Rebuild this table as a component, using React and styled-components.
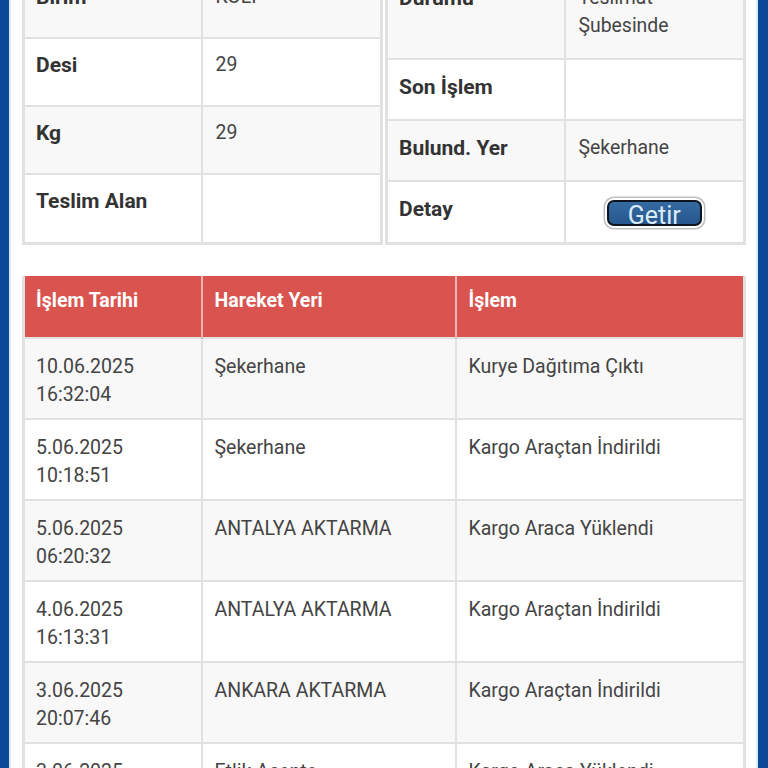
import React from 'react';
import styled, { createGlobalStyle } from 'styled-components';

const GlobalStyle = createGlobalStyle`
  html, body {
    margin: 0;
    padding: 0;
    background: #fff;
  }
  body {
    font-family: Roboto, "Liberation Sans", Arial, sans-serif;
    color: #333;
  }
`;

const Frame = styled.div`
  display: flex;
  height: 768px;
  overflow: hidden;
`;

const SideBar = styled.div`
  flex: none;
  width: ${p => (p.$side === 'left' ? '9px' : '10px')};
  background: #0b4a98;
  ${p => (p.$side === 'left' ? 'border-right' : 'border-left')}: 2px solid #dce8f5;
`;

const Content = styled.div`
  flex: 1;
  min-width: 0;
  padding: 0 10px 0 11px;
`;

// the page is scrolled a little, the first row is half out of view
const Scrolled = styled.div`
  margin-top: -32px;
`;

const InfoGrid = styled.div`
  display: grid;
  grid-template-columns: 1fr 1fr;
  gap: 2px;
  align-items: start;
`;

const InfoTable = styled.table`
  width: 100%;
  border-collapse: collapse;
  border: 3px solid #e1e1e1;
  table-layout: fixed;
`;

const InfoRow = styled.tr`
  height: ${p => p.$h}px;
  background: ${p => (p.$odd ? '#f8f8f8' : '#fff')};
`;

const Label = styled.td`
  box-sizing: border-box;
  width: 178px;
  padding: ${p => p.$pad || 13}px 11px 0;
  vertical-align: top;
  font-size: 21px;
  line-height: 28px;
  font-weight: 700;
  color: #333;
  border: 2px solid #e1e1e1;
`;

const Value = styled.td`
  padding: ${p => (p.$center ? 0 : p.$pad || 13)}px 13px 0;
  vertical-align: ${p => (p.$center ? 'middle' : 'top')};
  text-align: ${p => (p.$center ? 'center' : 'left')};
  font-size: 19.4px;
  line-height: 28px;
  color: #444;
  border: 2px solid #e1e1e1;
`;

const GetirButton = styled.button`
  display: inline-block;
  box-sizing: border-box;
  width: 95px;
  height: 26px;
  padding: 3px 0 0;
  border: 2px solid #10161f;
  border-radius: 7px;
  background: linear-gradient(#356aa3, #26578d);
  box-shadow: 0 0 0 2px #fff, 0 0 0 3.5px #bfbfbf;
  color: #dcebf8;
  font-family: Roboto, "Liberation Sans", Arial, sans-serif;
  font-size: 25px;
  font-weight: 400;
  line-height: 22px;
  overflow: hidden;
  vertical-align: middle;
`;

const MoveTable = styled.table`
  width: 100%;
  margin-top: 31px;
  border-collapse: collapse;
  table-layout: fixed;
  border: 3px solid #e1e1e1;
  border-top: none;
`;

const HeadCell = styled.th`
  box-sizing: border-box;
  width: ${p => p.$w || 'auto'};
  height: 62px;
  padding: 11px 12px 0;
  vertical-align: top;
  text-align: left;
  background: #d9534f;
  color: #fff;
  font-size: 19.5px;
  line-height: 28px;
  font-weight: 700;
  border-left: 2px solid #efb3b1;
  &:first-child {
    border-left: none;
    padding-left: 11px;
  }
`;

const MoveRow = styled.tr`
  height: 81px;
  background: ${p => (p.$odd ? '#f8f8f8' : '#fff')};
`;

const MoveCell = styled.td`
  padding: 14px 12px 0;
  vertical-align: top;
  font-size: 19.5px;
  line-height: 28px;
  color: #444;
  border: 2px solid #e1e1e1;
  &:first-child {
    padding-left: 11px;
  }
`;

const moves = [
  { date: '10.06.2025', time: '16:32:04', place: 'Şekerhane', act: 'Kurye Dağıtıma Çıktı' },
  { date: '5.06.2025', time: '10:18:51', place: 'Şekerhane', act: 'Kargo Araçtan İndirildi' },
  { date: '5.06.2025', time: '06:20:32', place: 'ANTALYA AKTARMA', act: 'Kargo Araca Yüklendi' },
  { date: '4.06.2025', time: '16:13:31', place: 'ANTALYA AKTARMA', act: 'Kargo Araçtan İndirildi' },
  { date: '3.06.2025', time: '20:07:46', place: 'ANKARA AKTARMA', act: 'Kargo Araçtan İndirildi' },
  { date: '3.06.2025', time: '19:41:12', place: 'Etlik Acente', act: 'Kargo Araca Yüklendi' },
];

export default function App() {
  return (
    <>
      <GlobalStyle />
      <Frame>
        <SideBar $side="left" />
        <Content>
          <Scrolled>
            <InfoGrid>
              <InfoTable>
                <tbody>
                  <InfoRow $h={68} $odd>
                    <Label $pad={12}>Birim</Label>
                    <Value $pad={12}>KOLİ</Value>
                  </InfoRow>
                  <InfoRow $h={68}>
                    <Label $pad={12}>Desi</Label>
                    <Value $pad={12}>29</Value>
                  </InfoRow>
                  <InfoRow $h={68} $odd>
                    <Label $pad={12}>Kg</Label>
                    <Value $pad={12}>29</Value>
                  </InfoRow>
                  <InfoRow $h={70}>
                    <Label $pad={12}>Teslim Alan</Label>
                    <Value $pad={12}></Value>
                  </InfoRow>
                </tbody>
              </InfoTable>
              <InfoTable>
                <tbody>
                  <InfoRow $h={89} $odd>
                    <Label>Durumu</Label>
                    <Value>Teslimat<br />Şubesinde</Value>
                  </InfoRow>
                  <InfoRow $h={61}>
                    <Label>Son İşlem</Label>
                    <Value></Value>
                  </InfoRow>
                  <InfoRow $h={61} $odd>
                    <Label>Bulund. Yer</Label>
                    <Value>Şekerhane</Value>
                  </InfoRow>
                  <InfoRow $h={63}>
                    <Label>Detay</Label>
                    <Value $center>
                      <GetirButton>Getir</GetirButton>
                    </Value>
                  </InfoRow>
                </tbody>
              </InfoTable>
            </InfoGrid>

            <MoveTable>
              <thead>
                <tr>
                  <HeadCell $w="178px">İşlem Tarihi</HeadCell>
                  <HeadCell $w="254px">Hareket Yeri</HeadCell>
                  <HeadCell>İşlem</HeadCell>
                </tr>
              </thead>
              <tbody>
                {moves.map((m, i) => (
                  <MoveRow key={i} $odd={i % 2 === 0}>
                    <MoveCell>{m.date}<br />{m.time}</MoveCell>
                    <MoveCell>{m.place}</MoveCell>
                    <MoveCell>{m.act}</MoveCell>
                  </MoveRow>
                ))}
              </tbody>
            </MoveTable>
          </Scrolled>
        </Content>
        <SideBar $side="right" />
      </Frame>
    </>
  );
}
